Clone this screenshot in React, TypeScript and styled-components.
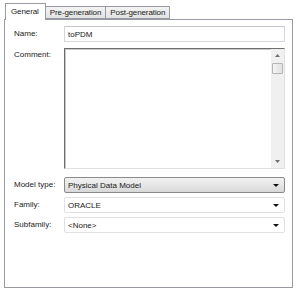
import styled, { createGlobalStyle } from "styled-components";

const Global = createGlobalStyle`
  html, body {
    margin: 0;
    background: #fff;
  }
  body {
    font-family: "Liberation Sans", Arial, sans-serif;
    font-size: 8px;
    color: #1a1a1a;
  }
`;

const Dialog = styled.div`
  width: 300px;
  height: 292px;
  padding: 3px 0 0 4px;
  box-sizing: border-box;
`;

const TabStrip = styled.div`
  display: flex;
  align-items: flex-end;
  padding-left: 1px;
  height: 16px;
  position: relative;
  z-index: 1;
`;

const Tab = styled.div<{ $active?: boolean }>`
  display: flex;
  align-items: center;
  box-sizing: border-box;
  height: ${(p) => (p.$active ? "17px" : "13px")};
  margin-bottom: ${(p) => (p.$active ? "-1px" : "0")};
  padding: ${(p) => (p.$active ? "0 6px 2px 5px" : "0 4px")};
  border: 1px solid #989aa2;
  border-bottom: ${(p) => (p.$active ? "none" : "1px solid #989aa2")};
  border-left: ${(p) => (p.$active ? "1px solid #989aa2" : "none")};
  background: ${(p) =>
    p.$active ? "#fff" : "linear-gradient(#f3f3f3, #e3e3e3)"};
  white-space: nowrap;
  letter-spacing: -0.1px;
  &:first-child {
    border-left: 1px solid #989aa2;
  }
`;

const Panel = styled.div`
  width: 289px;
  height: 269px;
  box-sizing: border-box;
  border: 1px solid #989aa2;
  padding: 6px 7px 0 9px;
  background: #fff;
`;

const Row = styled.div<{ $top?: number; $start?: boolean }>`
  display: grid;
  grid-template-columns: 50px 1fr;
  align-items: ${(p) => (p.$start ? "start" : "center")};
  margin-top: ${(p) => p.$top ?? 0}px;
`;

const Label = styled.div<{ $pad?: number }>`
  padding-top: ${(p) => p.$pad ?? 0}px;
  margin-top: -1px;
`;

const TextInput = styled.div`
  height: 16px;
  box-sizing: border-box;
  border: 1px solid #d5d7dc;
  border-top-color: #c3c5cb;
  padding: 0 3px;
  display: flex;
  align-items: center;
`;

const Memo = styled.div`
  height: 121px;
  box-sizing: border-box;
  border: 1px solid #dfe0e3;
  border-top-color: #6e6e6e;
  border-left-color: #6e6e6e;
  box-shadow: inset 1px 1px 0 #c8c8c8;
  display: flex;
  justify-content: flex-end;
`;

const ScrollBar = styled.div`
  width: 13px;
  background: #f0f0f0;
  display: flex;
  flex-direction: column;
  align-items: center;
`;

const ScrollArrow = styled.div`
  height: 13px;
  width: 13px;
  display: flex;
  align-items: center;
  justify-content: center;
`;

const Thumb = styled.div`
  width: 11px;
  height: 11px;
  box-sizing: border-box;
  margin-top: 1px;
  border: 1px solid #b4b4b4;
  border-radius: 1px;
  background: linear-gradient(90deg, #f4f4f4, #e2e2e2);
`;

const Track = styled.div`
  flex: 1;
`;

const Select = styled.div<{ $raised?: boolean }>`
  height: 16px;
  box-sizing: border-box;
  border: 1px solid ${(p) => (p.$raised ? "#8a8a8a" : "#e0e1e4")};
  border-radius: 2px;
  background: ${(p) =>
    p.$raised ? "linear-gradient(#f2f2f2, #e6e6e6 50%, #d8d8d8)" : "#fff"};
  display: flex;
  align-items: center;
  justify-content: space-between;
  padding: 0 5px 0 3px;
`;

const Caret = () => (
  <svg width="6" height="3" viewBox="0 0 6 3">
    <path d="M0 0h6L3 3z" fill="#111" />
  </svg>
);

const SmallArrow = ({ up }: { up?: boolean }) => (
  <svg width="5" height="3" viewBox="0 0 5 3">
    <path d={up ? "M0 3h5L2.5 0z" : "M0 0h5L2.5 3z"} fill="#707070" />
  </svg>
);

export default function App() {
  return (
    <Dialog>
      <Global />
      <TabStrip>
        <Tab $active>General</Tab>
        <Tab>Pre-generation</Tab>
        <Tab>Post-generation</Tab>
      </TabStrip>
      <Panel>
        <Row>
          <Label>Name:</Label>
          <TextInput>toPDM</TextInput>
        </Row>
        <Row $top={6} $start>
          <Label $pad={3}>Comment:</Label>
          <Memo>
            <ScrollBar>
              <ScrollArrow>
                <SmallArrow up />
              </ScrollArrow>
              <Thumb />
              <Track />
              <ScrollArrow>
                <SmallArrow />
              </ScrollArrow>
            </ScrollBar>
          </Memo>
        </Row>
        <Row $top={8}>
          <Label>Model type:</Label>
          <Select $raised>
            Physical Data Model
            <Caret />
          </Select>
        </Row>
        <Row $top={4}>
          <Label>Family:</Label>
          <Select>
            ORACLE
            <Caret />
          </Select>
        </Row>
        <Row $top={4}>
          <Label>Subfamily:</Label>
          <Select>
            &lt;None&gt;
            <Caret />
          </Select>
        </Row>
      </Panel>
    </Dialog>
  );
}
